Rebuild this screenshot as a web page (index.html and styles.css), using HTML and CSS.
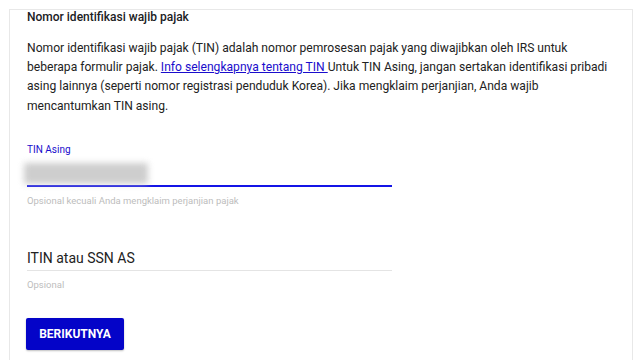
FILE: index.html
```html
<!DOCTYPE html>
<html lang="id">
<head>
    <meta charset="UTF-8">
    <meta name="viewport" content="width=device-width, initial-scale=1.0">
    <title>Nomor identifikasi wajib pajak</title>
    <link rel="stylesheet" href="styles.css">
</head>
<body>
    <div class="tax-card">
        <h2 class="card-title">Nomor identifikasi wajib pajak</h2>

        <p class="intro">
            Nomor identifikasi wajib pajak (TIN) adalah nomor pemrosesan pajak yang diwajibkan oleh IRS untuk<br>
            beberapa formulir pajak. <a href="#">Info selengkapnya tentang TIN </a>Untuk TIN Asing, jangan sertakan identifikasi pribadi<br>
            asing lainnya (seperti nomor registrasi penduduk Korea). Jika mengklaim perjanjian, Anda wajib<br>
            mencantumkan TIN asing.
        </p>

        <div class="field field-active">
            <label class="field-label">TIN Asing</label>
            <div class="field-input">
                <span class="blurred-value"></span>
            </div>
            <div class="field-hint">Opsional kecuali Anda mengklaim perjanjian pajak</div>
        </div>

        <div class="field">
            <div class="field-input">
                <span class="placeholder">ITIN atau SSN AS</span>
            </div>
            <div class="field-hint">Opsional</div>
        </div>

        <button class="next-btn">BERIKUTNYA</button>
    </div>
</body>
</html>
```

FILE: styles.css
```css
* {
    margin: 0;
    padding: 0;
    box-sizing: border-box;
}

body {
    background: #ffffff;
    font-family: Roboto, 'Liberation Sans', Arial, sans-serif;
    color: #202124;
    padding: 9px 7px 0 9px;
    overflow: hidden;
}

.tax-card {
    border: 1px solid #e8e8e8;
    border-bottom: none;
    height: 360px;
    padding: 0 17px;
}

.card-title {
    font-size: 12px;
    font-weight: 500;
    line-height: 14px;
    color: #202124;
}

.intro {
    margin-top: 15px;
    font-size: 12.1px;
    line-height: 19.2px;
    color: #222;
    white-space: nowrap;
}

.intro a {
    color: #1a0dcc;
    text-decoration: underline;
}

.field {
    width: 365px;
}

.field-active {
    margin-top: 27px;
}

.field-label {
    display: block;
    font-size: 10px;
    line-height: 14px;
    color: #1a0dcc;
}

.field-input {
    height: 32px;
    display: flex;
    align-items: flex-end;
    padding-bottom: 3px;
    border-bottom: 1px solid #e4e4e4;
}

.field-active .field-input {
    height: 30px;
    align-items: flex-start;
    padding: 6px 0 0 0;
    border-bottom: 2px solid #1414e6;
}

.blurred-value {
    display: block;
    width: 124px;
    height: 21px;
    margin-left: -3px;
    background: #c6c6c6;
    filter: blur(3px);
    opacity: 0.85;
}

.placeholder {
    font-size: 14px;
    line-height: 18px;
    color: #222;
}

.field-hint {
    margin-top: 7px;
    font-size: 9.5px;
    line-height: 14px;
    color: #bdbdbd;
}

.field + .field {
    margin-top: 31px;
}

.next-btn {
    display: block;
    margin-top: 26px;
    margin-left: -1px;
    width: 98px;
    height: 32px;
    background: #0404c8;
    color: #ffffff;
    border: none;
    border-radius: 2px;
    font-family: Roboto, 'Liberation Sans', Arial, sans-serif;
    font-weight: 700;
    font-size: 12px;
    box-shadow: 0 1px 2px rgba(0, 0, 0, 0.25);
}
```
